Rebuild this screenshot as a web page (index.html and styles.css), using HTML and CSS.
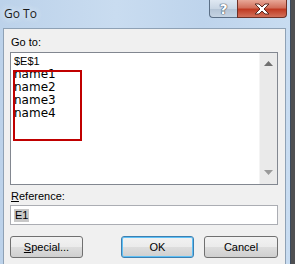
FILE: index.html
```html
<!doctype html>
<html lang="en">
<head>
  <meta charset="UTF-8">
  <title>Go To</title>
  <link rel="stylesheet" href="styles.css">
</head>
<body>
<div class="dialog">
  <div class="titlebar">
    <span class="title">Go To</span>
    <div class="caption-buttons">
      <span class="cap-btn cap-help">?</span>
      <span class="cap-btn cap-close">
        <svg width="18" height="12" viewBox="0 0 18 12">
          <path d="M2 1h4l3 3 3-3h4l-5 5 5 5h-4l-3-3-3 3H2l5-5z" fill="#fff" stroke="#5a2a22" stroke-width="1"/>
        </svg>
      </span>
    </div>
  </div>
  <div class="client">
    <div class="field-label">Go to:</div>
    <div class="listbox">
      <ul class="items">
        <li>$E$1</li>
        <li class="name">name1</li>
        <li class="name">name2</li>
        <li class="name">name3</li>
        <li class="name">name4</li>
      </ul>
      <div class="scrollbar">
        <svg width="9" height="5" viewBox="0 0 9 5"><path d="M0 5L4.5 0 9 5z" fill="#707070"/></svg>
        <svg width="9" height="5" viewBox="0 0 9 5"><path d="M0 0L4.5 5 9 0z" fill="#9a9a9a"/></svg>
      </div>
      <div class="mark-box"></div>
    </div>
    <div class="field-label field-label-ref"><u>R</u>eference:</div>
    <div class="textbox"><span class="selected">E1</span></div>
    <div class="button-row">
      <span class="btn"><u>S</u>pecial...</span>
      <span class="btn btn-default">OK</span>
      <span class="btn">Cancel</span>
    </div>
  </div>
</div>
</body>
</html>
```

FILE: styles.css
```css
body {
  margin: 0;
  background: #4f5052;
  font-family: "Liberation Sans", Arial, sans-serif;
  font-size: 11px;
  color: #000;
}

.dialog {
  width: 290px;
  height: 264px;
  border-right: 1px solid #3b4a5c;
  background: linear-gradient(90deg, #bcd2ea, #c9dcf0 40%, #bed4ec 70%, #c8dcf1);
  display: flex;
  flex-direction: column;
  overflow: hidden;
}

.titlebar {
  height: 28px;
  display: flex;
  flex-shrink: 0;
}

.title {
  padding-left: 4px;
  line-height: 27px;
  font-family: "Open Sans", sans-serif;
  font-size: 12px;
  color: #1b1b1b;
  text-shadow: 0 0 6px #e4eef8, 0 0 6px #e4eef8;
}

.caption-buttons {
  margin-left: auto;
  margin-right: 3px;
  display: flex;
  align-self: flex-start;
}

.cap-btn {
  height: 17px;
  display: flex;
  align-items: center;
  justify-content: center;
  border: 1px solid #5b6f86;
  border-top: none;
}

.cap-help {
  width: 27px;
  border-radius: 0 0 0 4px;
  border-right: none;
  background: linear-gradient(#dfe8f2, #c9d6e4 50%, #b3c3d5 51%, #c5d3e2);
  font-family: "DejaVu Sans", sans-serif;
  font-weight: bold;
  font-size: 14px;
  color: #fff;
  text-shadow: 0 0 1px #3a4a5c, 0 0 1px #3a4a5c, 0 0 1px #3a4a5c;
}

.cap-close {
  width: 48px;
  border-color: #6e3026;
  border-radius: 0 0 4px 0;
  background: linear-gradient(#e8a898, #d2705c 45%, #c03a22 55%, #d2705a);
}

.client {
  flex: 1;
  margin: 0 4px 0 3px;
  padding: 7px 7px 0 6px;
  border: 1px solid #8ea1b5;
  border-bottom: none;
  background: #f0f0f0;
}

.field-label {
  padding-left: 1px;
  line-height: 13px;
  margin-bottom: 3px;
}

.field-label-ref {
  margin-top: 5px;
  margin-bottom: 2px;
}

.listbox {
  position: relative;
  height: 131px;
  border: 1px solid #828790;
  background: #fff;
  display: flex;
}

.items {
  flex: 1;
  margin: 0;
  padding: 2px 0 0 3px;
  list-style: none;
}

.items li {
  line-height: 13px;
  height: 13px;
}

.items .name {
  font-family: "DejaVu Sans", sans-serif;
  font-size: 12px;
}

.scrollbar {
  width: 17px;
  background: #eaeaea;
  border-left: 1px solid #f4f4f4;
  display: flex;
  flex-direction: column;
  justify-content: space-between;
  align-items: center;
  padding: 8px 0 9px;
}

.mark-box {
  position: absolute;
  left: 2px;
  top: 17px;
  width: 65px;
  height: 67px;
  border: 2px solid #c00000;
}

.textbox {
  height: 18px;
  border: 1px solid #abadb3;
  background: #fff;
  display: flex;
  align-items: center;
  padding-left: 3px;
}

.selected {
  background: #c8c8c8;
  line-height: 13px;
  padding: 0 1px;
}

.button-row {
  margin-top: 11px;
  display: flex;
  gap: 10px;
}

.btn {
  width: 71px;
  height: 20px;
  border: 1px solid #707070;
  border-radius: 3px;
  background: linear-gradient(#f2f2f2, #ebebeb 50%, #dddddd 51%, #cfcfcf);
  display: flex;
  align-items: center;
  justify-content: center;
}

.btn:first-child {
  margin-right: 28px;
}

.btn-default {
  border-color: #3c7fb1;
  box-shadow: inset 0 0 0 1px #5fc0f5;
}

.btn:last-child {
  width: 72px;
}
```
